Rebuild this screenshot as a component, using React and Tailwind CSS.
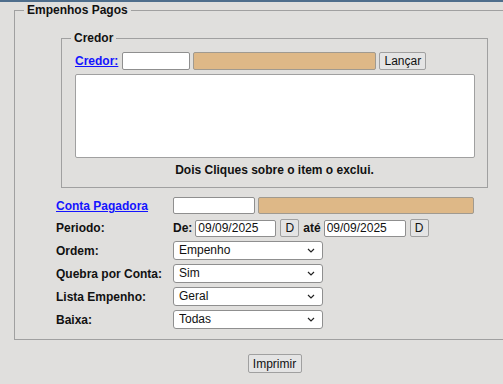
import React from "react";

function Chevron() {
  return (
    <svg className="pointer-events-none absolute right-[8px] top-[7px]" width="8" height="5" viewBox="0 0 8 5" fill="none">
      <path d="M1 1l3 3 3-3" stroke="#222" strokeWidth="1.2" />
    </svg>
  );
}

function Select({ value }) {
  return (
    <div className="relative h-[19px] w-[150px]">
      <select
        defaultValue={value}
        className="h-[19px] w-[150px] appearance-none rounded-[3px] border border-[#8f8f8f] bg-white pl-[5px] text-[12px] leading-[17px] text-[#111]"
      >
        <option>{value}</option>
      </select>
      <Chevron />
    </div>
  );
}

const inputCls = "h-[17px] rounded-[2px] border border-[#8f8f8f] bg-white px-[2px] text-[12px] leading-[15px]";
const tanCls = "h-[17px] rounded-[2px] border border-[#a09a90] bg-[#deb887]";
const btnCls = "rounded-[2px] border border-[#a0a0a0] bg-[#e4e4e4] text-[12px] leading-[16px] text-[#111]";

export default function App() {
  return (
    <div className="h-[384px] w-[503px] overflow-hidden bg-[#e0dfdd] font-['Liberation_Sans',Arial,sans-serif] text-[12px] text-[#111]">
      <div className="h-[2px] bg-[#4f6e8c]" />
      <fieldset className="ml-[14px] mt-[1px] w-[521px] border border-[#a0a0a0] pb-[10px]">
        <legend className="ml-[9px] px-[3px] font-bold leading-[14px]">Empenhos Pagos</legend>

        <fieldset className="ml-[46px] mt-[14px] w-[427px] border border-[#a0a0a0] pb-[10px]">
          <legend className="ml-[9px] px-[3px] font-bold leading-[14px]">Credor</legend>
          <div className="ml-[13px] mt-[7px] flex h-[18px] items-center gap-[3px]">
            <a href="#" className="mr-[1px] font-bold text-[#1414ff] underline">Credor:</a>
            <input className={inputCls + " h-[18px] w-[68px]"} />
            <input className={tanCls + " h-[18px] w-[183px]"} />
            <button className={btnCls + " h-[18px] w-[47px]"}>Lançar</button>
          </div>
          <textarea className="ml-[13px] mt-[4px] block h-[84px] w-[400px] resize-none rounded-[2px] border border-[#a0a0a0] bg-white" />
          <p className="mt-[5px] text-center font-bold leading-[14px]">Dois Cliques sobre o item o exclui.</p>
        </fieldset>

        <div className="ml-[41px] mt-[9px]">
          <div className="flex h-[22px] items-start">
            <a href="#" className="w-[117px] font-bold text-[#1414ff] underline">Conta Pagadora</a>
            <div className="flex gap-[3px]">
              <input className={inputCls + " w-[82px]"} />
              <input className={tanCls + " w-[216px]"} />
            </div>
          </div>
          <div className="flex h-[22px] items-start">
            <span className="w-[117px] font-bold">Periodo:</span>
            <div className="flex items-center gap-[3px]">
              <span className="font-bold">De:</span>
              <input className={inputCls + " w-[81px]"} defaultValue="09/09/2025" />
              <button className={btnCls + " ml-[1px] h-[18px] w-[19px]"}>D</button>
              <span className="ml-[1px] font-bold">até</span>
              <input className={inputCls + " w-[82px]"} defaultValue="09/09/2025" />
              <button className={btnCls + " ml-[1px] h-[18px] w-[19px]"}>D</button>
            </div>
          </div>
          <div className="flex h-[23px] items-start">
            <span className="w-[117px] pt-[1px] font-bold">Ordem:</span>
            <Select value="Empenho" />
          </div>
          <div className="flex h-[23px] items-start">
            <span className="w-[117px] pt-[1px] font-bold">Quebra por Conta:</span>
            <Select value="Sim" />
          </div>
          <div className="flex h-[23px] items-start">
            <span className="w-[117px] pt-[1px] font-bold">Lista Empenho:</span>
            <Select value="Geral" />
          </div>
          <div className="flex h-[19px] items-start">
            <span className="w-[117px] pt-[1px] font-bold">Baixa:</span>
            <Select value="Todas" />
          </div>
        </div>
      </fieldset>

      <div className="ml-[14px] mt-[14px] flex w-[521px] justify-center">
        <button className={btnCls + " h-[19px] w-[54px]"}>Imprimir</button>
      </div>
    </div>
  );
}
